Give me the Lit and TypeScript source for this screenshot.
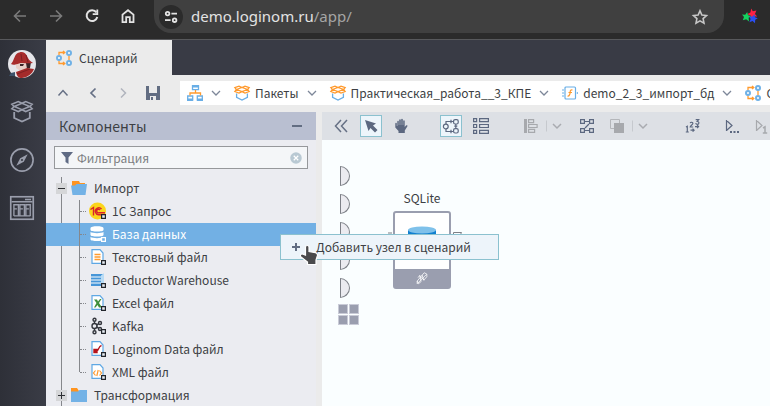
import { LitElement, html, svg, css } from "lit";
import { customElement, property } from "lit/decorators.js";
import { classMap } from "lit/directives/class-map.js";

const glyphs: Record<string, unknown> = {
  back: svg`<path d="M14 8H2.500M8 2.500L2.500 8 8 13.500" fill="none" stroke="#7b7b7b" stroke-width="1.600"/>`,
  forward: svg`<path d="M2 8h11.500M8 2.500L13.500 8 8 13.500" fill="none" stroke="#7b7b7b" stroke-width="1.600"/>`,
  reload: svg`<path d="M12.400 4.400A5.400 5.400 0 1 0 13.300 9" fill="none" stroke="#e3e3e3" stroke-width="2"/><path d="M14.200 1.500V7H8.700V5.200h3.700V1.500z" fill="#e3e3e3"/>`,
  home: svg`<path d="M2.500 14.200V6.600L8 2.200l5.500 4.400v7.600h-3.700V9.200H6.200v5z" fill="none" stroke="#e3e3e3" stroke-width="1.800"/>`,
  tune: svg`<g fill="none" stroke="#e3e3e3" stroke-width="1.800"><circle cx="4.600" cy="4.600" r="1.800"/><path d="M8.400 4.600H14M2 11.200h5.600"/><circle cx="11.600" cy="11.200" r="1.800"/></g>`,
  star: svg`<path d="M8 1.800l1.900 4.200 4.600.5-3.400 3.100.9 4.500L8 11.800l-4 2.300.9-4.500L1.500 6.500l4.600-.5z" fill="none" stroke="#c7c7c7" stroke-width="1.600"/>`,
  extension: svg`<path d="M9.200.500l1.600 2.800 3.600-.700-1.400 3.400 2.200 2.600-3.800-.200-2 2.600-.800-3.600L5 6.200l3.400-1.800z" fill="#fb2144"/><path d="M5.200 4l.800 3.200 3.200.800-2.600 1.800.4 3.600-2.800-2.200-3.400 1 1.200-3.200L0 6.600l3.200.200z" fill="#14d25f"/><path d="M12.400 6.400l.600 2.800 2.800 1-2.600 1.600-.200 3.400-2.400-2.200-3.200 1.200 1.200-3.200-1.400-2.600h3.200z" fill="#2b4ff2"/>`,
  up: svg`<path d="M3.500 10.500L8 5.500l4.500 5" fill="none" stroke="#667085" stroke-width="1.500"/>`,
  left: svg`<path d="M10.500 3.500L6 8l4.500 4.500" fill="none" stroke="#667085" stroke-width="1.700"/>`,
  right: svg`<path d="M6 3.500L10.500 8 6 12.500" fill="none" stroke="#b0b4bd" stroke-width="1.500"/>`,
  down: svg`<path d="M4 6l4 4 4-4" fill="none" stroke="#7d8799" stroke-width="1.300"/>`,
  downGrey: svg`<path d="M4 6l4 4 4-4" fill="none" stroke="#a9abb0" stroke-width="1.500"/>`,
  save: svg`<path d="M1 1h3v7h8V1h3v14H1z" fill="#626d82"/><path d="M5 11h6v4H5z" fill="#ebebeb"/><path d="M6 12h2v3H6z" fill="#626d82"/>`,
  scenario: svg`<g fill="none" stroke="#ff9a2e" stroke-width="1.300"><path d="M3 5.500V2.500h6M3 10.500v3h6M7 1l1.800 1.500L7 4M7 12l1.800 1.500L7 15M13 5.500v5"/></g><g fill="#fff" stroke="#6fb1e6" stroke-width="2"><circle cx="3" cy="8" r="2"/><circle cx="13" cy="3" r="2"/><circle cx="13" cy="13" r="2"/></g>`,
  hierarchy: svg`<g fill="#fff" stroke="#69aee6" stroke-width="1.300"><path d="M5.500.700h6v4h-6zM.700 11h5v4h-5zM10.300 11h5v4h-5z"/></g><path d="M5 .5h7v2H5zM0 13.500h6V16H0zM10 13.500h6V16h-6z" fill="#69aee6"/><path d="M8.500 5v3M3 10.500V8h10.500v2.500" fill="none" stroke="#ff9a2e" stroke-width="1.300"/>`,
  box: svg`<path d="M.800 2.600L5 1.200l3 1.300 3-1.300 4.200 1.400L13.500 4.500l1.700 2L11 8 8 6.600 5 8 .800 6.500l1.700-2zM2.500 4.500L8 2.500l5.500 2L8 6.600z" fill="none" stroke="#ff9a2e" stroke-width="1.200"/><path d="M2.600 8.500v3.800L8 15l5.400-2.700V8.500" fill="none" stroke="#69aee6" stroke-width="1.300"/>`,
  model: svg`<rect x="3" y="2" width="10.500" height="12" rx="1" fill="#fff" stroke="#69aee6" stroke-width="1.200"/><path d="M1 4v8M15.300 7v2" stroke="#69aee6" stroke-dasharray="2 1"/><path d="M10.500 5c-3-.500-2 2-2.500 3.500s-.500 3-2.500 2.500M6.500 7.500h3.500" fill="none" stroke="#ff9a2e" stroke-width="1.200"/>`,
  package: svg`<path d="M1.200 2.800L5.500 1 8 2.200 10.500 1l4.300 1.800-1.600 1.500 1.600 1.500-4.300 1.900L8 6.500 5.500 7.700 1.200 5.800l1.600-1.500zM2.800 4.300L8 2.200l5.200 2.100L8 6.500z" fill="none" stroke="#9a9eac" stroke-width="1"/><path d="M2.800 8v4L8 14.300l5.200-2.300V8" fill="none" stroke="#9a9eac" stroke-width="1.200"/>`,
  compass: svg`<circle cx="8" cy="8" r="7.400" fill="none" stroke="#9a9eac" stroke-width="1.100"/><path d="M11.800 4.200L9.200 9.200 4.200 11.800 6.800 6.800z" fill="#9a9eac"/><circle cx="8" cy="8" r=".700" fill="#383a44"/>`,
  table: svg`<rect x=".500" y=".500" width="15" height="15" fill="none" stroke="#9a9eac" stroke-width="1.100"/><path d="M1 3.900h14M10 2.300h4" stroke="#9a9eac" stroke-width="1"/><path d="M2.600 13.400V5.800h3v7.600M2.600 8.600h2M6.600 13.400V5.800h3v7.600M6.600 8.600h2M10.600 13.400V5.800h2.900v7.600M10.600 8.600h2M2.600 13.200h11" fill="none" stroke="#9a9eac" stroke-width=".900"/>`,
  funnel: svg`<path d="M2 2h12l-4.500 5.500V14L6.500 12V7.500z" fill="#5f6b84"/>`,
  clear: svg`<circle cx="8" cy="8" r="7.700" fill="#b9c9d3"/><path d="M5 5l6 6M11 5l-6 6" stroke="#fff" stroke-width="1.600"/>`,
  minus: svg`<path d="M3 8h10" stroke="#626d82" stroke-width="2"/>`,
  plus: svg`<path d="M4 8h8M8 4v8" stroke="#626d82" stroke-width="2"/>`,
  folderOpen: svg`<path d="M1 1h7l1 2h5v4H1z" fill="#ff9420"/><path d="M0 5.500h4L5.500 4H16l-1.500 11h-13z" fill="#73b2e6"/>`,
  folder: svg`<path d="M0 1h6l2 3v4H0z" fill="#ff9420"/><path d="M0 4.500h7L8.500 3H16v12H0z" fill="#73b2e6"/>`,
  collapse: svg`<path d="M8 2L2.500 8 8 14M14 2L8.500 8l5.500 6" fill="none" stroke="#667085" stroke-width="1.500"/>`,
  pointer: svg`<path d="M2 2l11 3.500-3 2 4.500 4.500-2.500 2.500L7.500 10l-2 3z" fill="#5c6880"/>`,
  hand: svg`<path d="M4.300 8V3.500c0-1 1.500-1 1.500 0V7h.400V2c0-1 1.600-1 1.600 0v5h.400V1.500c0-1 1.600-1 1.600 0V7h.400V3c0-1 1.500-1 1.500 0v6l1.300-1.500c1-.800 2 .200 1.300 1L11.800 12.500V15H5.500v-2L2.300 9.500V5.500c0-1 1.500-1 1.500 0V8z" fill="#5c6880"/>`,
  graph: svg`<g fill="none" stroke="#5c6880" stroke-width="1.200"><circle cx="2.800" cy="8.500" r="2.400"/><rect x="10.600" y="1.600" width="4.600" height="4.400" rx="1.500"/><rect x="10.600" y="10.600" width="4.600" height="4.400" rx="1.500"/><path d="M3 6V3.500h7M3 11v2.500h7M12.800 6v4.500M8 1.800v3.400M8 11.800v3.400M11.300 8.200h3"/></g>`,
  list: svg`<g fill="none" stroke="#5c6880" stroke-width="1.200"><path d="M.600.600h3v3h-3zM6.600.600h8.800v3H6.600zM.600 6.500h3v3h-3zM6.600 6.500h8.800v3H6.600zM.600 12.400h3v3h-3zM6.600 12.400h8.800v3H6.600z"/></g>`,
  align: svg`<path d="M1 1h3v14H1z" fill="#a7a9ad"/><path d="M5.600 1.600h5v3h-5zM5.600 6.500h8.500v3H5.600zM5.600 11.400h6v3h-6z" fill="none" stroke="#a7a9ad" stroke-width="1.200"/>`,
  layout: svg`<g fill="none" stroke="#5c6880" stroke-width="1.200"><path d="M1.600 1.600h3.800v3.800H1.600zM10.600 1.600h3.800v3.800h-3.800zM1.600 10.600h3.800v3.800H1.600zM10.600 10.600h3.800v3.800h-3.800zM5.400 3.500h5.200M5.400 12.500h5.200M10 6l-4 4"/></g>`,
  front: svg`<path d="M1.500 1.500h9v9h-9z" fill="none" stroke="#b4b6ba"/><path d="M5 5h10v10H5z" fill="#a7a9ad"/>`,
  numbering: svg`<g fill="none" stroke="#5c6880" stroke-width="1.200"><path d="M1 9l1.300-.800V14M.800 14h3M5.200 5.200c.400-1.400 3-1.200 2.600.500-.200 1-2.600 2.300-2.600 3.300h3M10.700 1.600h3l-1.500 1.900c2.400 0 2 2.800.200 2.800-1 0-1.500-.300-1.800-1M5.500 12.200h3.500M7.600 10.700l1.500 1.500-1.500 1.500M10 8.600h3.500M12.100 7.100l1.500 1.500-1.500 1.500"/></g>`,
  run: svg`<path d="M2.500 2v11M2.500 2.500l5.500 5-5.500 5" fill="none" stroke="#5c6880" stroke-width="1.200"/><path d="M6 13h2v2H6zM9.500 13h2v2h-2zM13 13h2v2h-2z" fill="#5c6880"/>`,
  runOne: svg`<path d="M2.500 2v11M2.500 2.500l5.500 5-5.500 5" fill="none" stroke="#a7a9ad" stroke-width="1.200"/><path d="M9 10l2-1.200V15M8.800 15h4.400" fill="none" stroke="#a7a9ad" stroke-width="1.500"/>`,
  node: svg`<path d="M2.500 11.500V14.500L13 4M5 5.500l5.500 5M3.500 7.500L5.500 5l1.500 7-3 2.500-1.500-3 8-9.500 3 1.500v3l-3.500 4L8 4.500" fill="none" stroke="#fff" stroke-width=".900"/>`,
};

function icon(name: string, size = 16) {
  return html`<svg width=${size} height=${size} viewBox="0 0 16 16" aria-hidden="true">${glyphs[name]}</svg>`;
}

const fileFrame = svg`<path d="M3 1.600h8L14 5v10.400H3z" fill="#fff" stroke="#5fa8e4" stroke-width="1.200"/>`;
const badge = svg`<path d="M12.600 12.600h3.800v3.800h-3.800z" fill="#e8eef5" stroke="#22252b" stroke-width="1.200"/>`;
const lightBadge = svg`<path d="M12.600 12.600h3.800v3.800h-3.800z" fill="#72b0e4" stroke="#fff" stroke-width="1.200"/>`;
const components: { name: string; art: unknown }[] = [
  { name: "1С Запрос", art: svg`<circle cx="8.500" cy="9" r="8.500" fill="#fbd51c"/><path d="M1.500 7.500L4.500 5.500v8M12.500 7a3.500 3.500 0 1 0-2 5.700H16M11 8a1.800 1.800 0 1 0-1 2.800h6" fill="none" stroke="#d8232a" stroke-width="1.400"/>` },
  { name: "База данных", art: svg`<path d="M1.500 3c0-2.500 13-2.500 13 0v2c0 2-13 2-13 0zM1.500 7c2 1.500 11 1.500 13 0v3c0 2-13 2-13 0zM1.500 12c2 1.500 11 1.500 13 0v2.500c0 2-13 2-13 0z" fill="#fff"/>` },
  { name: "Текстовый файл", art: svg`${fileFrame}<path d="M5.500 6.500h6M5.500 9h6M5.500 11.500h6" stroke="#ff9a2e" stroke-width="1.300"/>` },
  { name: "Deductor Warehouse", art: svg`<path d="M2 3h12v12H2z" fill="#4796d8"/><path d="M12 4.500L15 2v11l-3 2z" fill="#b9dcf5"/><path d="M2 6h10M2 9h10M2 12h10" stroke="#fff"/>` },
  { name: "Excel файл", art: svg`${fileFrame}<path d="M5 5.500h3l1 2 2-2.500h1.500L10 9l3 4.500h-3L8.500 11 6.500 13.500H5L7.500 9z" fill="#3f8f3c"/>` },
  { name: "Kafka", art: svg`<g fill="none" stroke="#33363d" stroke-width="1.400"><circle cx="5.500" cy="9" r="2.500"/><circle cx="5.500" cy="2.800" r="1.500"/><circle cx="5.500" cy="15.200" r="1.500"/><circle cx="11" cy="6" r="1.500"/><circle cx="11" cy="12" r="1.500"/><path d="M5.500 4.500v2M5.500 11.500v2M7.500 8l2-1M7.500 10l2 1"/></g>` },
  { name: "Loginom Data файл", art: svg`${fileFrame}<path d="M5 9.500h3v3H5zM7.500 11.500C9.500 11 9.500 6 12.500 5.500" fill="none" stroke="#b5121b" stroke-width="1.400"/><path d="M5 9.500h3v3H5z" fill="#b5121b"/>` },
  { name: "XML файл", art: svg`${fileFrame}<path d="M6.500 7.500l-2 2.500 2 2.500M10.500 7.500l2 2.500-2 2.500M9.200 7l-1.400 6" fill="none" stroke="#ff9a2e" stroke-width="1.200"/>` },
];

@customElement("component-tree")
class ComponentTree extends LitElement {
  @property() selected = "База данных";

  static styles = css`
    * { box-sizing: border-box; }
    :host { display: block; flex: 1; min-height: 0; overflow: hidden; padding-top: 8px; }
    ul { list-style: none; margin: 0; padding: 0; }
    .root { position: relative; }
    .root::before { content: ""; position: absolute; left: 15px; top: 0; bottom: 0; width: 1px; background: #85878c; }
    .row { display: flex; align-items: center; width: 100%; height: 23px; padding: 0 0 1px 10px; gap: 4px;
      border: 0; background: none; font: inherit; color: inherit; text-align: left; white-space: nowrap; }
    .row > svg + span { padding-left: 3px; }
    .toggle { position: relative; width: 11px; height: 11px; background: #d5d6d8; flex: none; }
    .toggle::before, .plus::after { content: ""; position: absolute; left: 2px; top: 5px; width: 7px; height: 1px; background: #2e3034; }
    .plus::after { transform: rotate(90deg); }
    .children { position: relative; }
    .children::before { content: ""; position: absolute; left: 33px; top: 0; bottom: 12px; width: 1px; background: #85878c; }
    .leaf { padding-left: 34px; gap: 3px; }
    .leaf::before { content: ""; width: 6px; flex: none; border-top: 1px dotted #85878c; }
    .leaf > svg + span { padding-left: 2px; }
    .active { background: #72b0e4; color: #fff; }
    svg { display: block; flex: none; }
  `;

  render() {
    return html`<ul class="root">
      <li>
        <button class="row"><span class="toggle"></span>${icon("folderOpen")}<span>Импорт</span></button>
        <ul class="children">
          ${components.map((c) => {
            const active = c.name === this.selected;
            return html`<li>
              <button class=${classMap({ row: true, leaf: true, active })}>
                <svg width="18" height="18" viewBox="0 0 18 18" aria-hidden="true">${c.art}${active ? lightBadge : badge}</svg><span>${c.name}</span>
              </button></li>`;
          })}
        </ul>
      </li>
      <li><button class="row"><span class="toggle plus"></span>${icon("folder")}<span>Трансформация</span></button></li>
    </ul>`;
  }
}

@customElement("app-root")
class AppRoot extends LitElement {
  static styles = css`
    * { box-sizing: border-box; }
    :host { display: flex; flex-direction: column; position: relative; height: 100vh; overflow: hidden; background: #ebebeb;
      color: #3d3f44; font: 12px/18px "Noto Sans CJK SC", sans-serif; }
    button { border: 0; padding: 0; background: none; font: inherit; color: inherit; display: flex; align-items: center; justify-content: center; flex: none; }
    a { color: inherit; text-decoration: none; }
    svg { display: block; flex: none; overflow: visible; }

    .browser { display: flex; align-items: flex-start; height: 40px; flex: none; background: #2b2b2b; border-bottom: 1px solid #58595c; padding-left: 12px; }
    .nav { display: flex; gap: 20px; padding: 8px 18px 0 0; }
    .address { display: flex; align-items: center; flex: 1; min-width: 0; height: 33px; background: #404040; border-radius: 0 0 17px 17px; padding: 0 16px 0 5px; gap: 8px; }
    .site { width: 24px; height: 24px; border-radius: 50%; background: #2b2b2b; }
    .url { flex: 1; min-width: 0; color: #e3e3e3; font: 15px/20px "Noto Sans", sans-serif; padding-bottom: 2px; }
    .url span { color: #a5a5a5; }
    .extension { padding: 8px 12px 0 18px; }

    .app { display: flex; flex: 1; min-height: 0; }
    .side { display: flex; flex-direction: column; align-items: center; gap: 24px; width: 46px; flex: none; padding: 10px 2px 0 0;
      background: linear-gradient(90deg, #2e3038, #3a3c46); }
    .side button { height: 24px; }
    .side .avatar { height: 28px; margin-bottom: -2px; }
    .main { display: flex; flex-direction: column; flex: 1; min-width: 0; }
    .tabs { display: flex; height: 35px; flex: none; background: #393b45; }
    .tab { width: 126px; padding-left: 10px; gap: 7px; background: #ebebeb; justify-content: flex-start; }
    .crumb-bar { display: flex; align-items: center; height: 36px; flex: none; padding-left: 9px; }
    .history { display: flex; gap: 14px; width: 125px; flex: none; }
    .crumbs { display: flex; align-items: center; flex: 1; min-width: 0; height: 24px; overflow: hidden; padding-left: 7px; background: #fff; white-space: nowrap; }
    .crumbs a { display: flex; align-items: center; gap: 5px; flex: none; }
    .crumbs button { padding: 0 10px 0 5px; }

    .work { display: flex; flex: 1; min-height: 0; gap: 6px; padding-top: 1px; }
    .panel { display: flex; flex-direction: column; width: 270px; flex: none; background: #ebecf1; }
    .panel-head { display: flex; align-items: center; justify-content: space-between; height: 28px; flex: none; padding: 0 11px 0 13px; background: #b9bfd1; }
    h2 { margin: 0; font-size: 14px; font-weight: 400; }
    .filter { display: flex; align-items: center; gap: 2px; height: 23px; flex: none; margin: 6px 8px 0; padding: 0 5px 0 4px; border: 1px solid #96989b; background: #f4f6f8; }
    .filter input { flex: 1; min-width: 0; border: 0; padding: 0; outline: 0; background: none; font: inherit; }
    .filter input::placeholder { color: #7c7e82; }

    .stage { display: flex; flex-direction: column; flex: 1; min-width: 0; background: #fafeff; }
    .tools { display: flex; align-items: center; height: 28px; flex: none; gap: 28px; padding-left: 8px; overflow: hidden; background: #dde0e5; }
    .group { display: flex; gap: 8px; flex: none; }
    .execution { display: flex; gap: 17px; flex: none; }
    .split { display: flex; gap: 4px; }
    .tool { width: 22px; height: 22px; border: 1px solid transparent; }
    .on { border-color: #8bc1cf; background: #edf5fb; }
    .tool.more { border-left-color: #c6c9ce; height: 12px; align-self: center; }

    .canvas { position: relative; flex: 1; min-height: 0; overflow: hidden; }
    .ports { display: flex; flex-direction: column; gap: 8px; padding: 26px 0 0 18px; width: 60px; }
    .port { width: 10px; height: 20px; border: 1px solid #7d8087; border-radius: 0 10px 10px 0; background: #ebebf0; }
    .pager { display: grid; grid-template-columns: 10px 10px; gap: 1px; width: 21px; margin: -2px 0 0 -2px; }
    .pager i { height: 10px; border: 1px solid #c9cbd7; background: #9a9eaf; }
    .node { position: absolute; left: 71px; top: 49px; width: 58px; text-align: center; }
    .card { height: 78px; margin-top: 4px; border: 2px solid #9a9eaf; border-radius: 3px; background: #fff; display: flex; flex-direction: column; justify-content: space-between; align-items: center; }
    .card > svg { margin-top: 13px; }
    .foot { width: 100%; height: 18px; background: #9a9eaf; display: flex; align-items: center; justify-content: center; }
    .pins { position: absolute; left: -10px; top: 42px; }
    .hint { position: absolute; left: 280px; top: 234px; width: 219px; height: 26px; padding: 0 0 0 7px; gap: 12px; justify-content: flex-start;
      border: 1px solid #8bc1cf; background: #edf4fa; white-space: nowrap; }
    .cursor { position: absolute; left: 299px; top: 243px; }
  `;

  private tool(name: string, label: string, on = false) {
    return html`<button class=${classMap({ tool: true, on })} aria-label=${label}>${icon(name)}</button>`;
  }

  private split(name: string, label: string) {
    return html`<div class="split">${this.tool(name, label)}<button class="tool more" aria-label="Варианты">${icon("downGrey")}</button></div>`;
  }

  private crumb(name: string, text: string) {
    return html`<a href="#">${icon(name)}${text}</a><button aria-label="Развернуть">${icon("down")}</button>`;
  }

  render() {
    return html`
      <header class="browser">
        <nav class="nav">
          <button aria-label="Назад">${icon("back")}</button><button aria-label="Вперёд">${icon("forward")}</button>
          <button aria-label="Обновить">${icon("reload")}</button><button aria-label="Домой">${icon("home")}</button>
        </nav>
        <div class="address">
          <button class="site" aria-label="Сведения о сайте">${icon("tune")}</button>
          <div class="url" role="textbox" aria-label="Адрес">demo.loginom.ru<span>/app/</span></div>
          <button aria-label="В закладки">${icon("star")}</button>
        </div>
        <button class="extension" aria-label="Расширение">${icon("extension")}</button>
      </header>
      <div class="app">
        <nav class="side">
          <button class="avatar" aria-label="Профиль"><svg width="28" height="28" viewBox="0 0 28 28">
            <circle cx="14" cy="14" r="14" fill="#e6e6ea"/>
            <path d="M8 13h13v6l-7 3-6-4z" fill="#e8cfc8"/><path d="M12 14l4 0-1 2-3 0zM18 13l5-1-1 6-3 1z" fill="#3a2528"/>
            <path d="M3 14C6 11 6 6 9 3.500c4-2.500 8-2 10 2.500 1 3 3 5 6 7-6 1-10-1-14 .500-3 1-6 2-8 .500z" fill="#a82c2c"/><path d="M13 4l1 7M18 5l2 7" stroke="#7e2023"/>
            <path d="M8 22l11-4 7 1c-2 5-6 8-12 9-4 0-5-2-6-6z" fill="#a32b2b"/><path d="M9 24l13-5" stroke="#7e2023"/><path d="M1 26l2-3 4-1v4z" fill="#3c536b"/></svg></button>
          <button aria-label="Пакеты">${icon("package", 24)}</button>
          <button aria-label="Навигация">${icon("compass", 24)}</button>
          <button aria-label="Таблицы">${icon("table", 24)}</button>
        </nav>
        <div class="main">
          <div class="tabs"><button class="tab">${icon("scenario")}Сценарий</button></div>
          <div class="crumb-bar">
            <div class="history">
              <button aria-label="Вверх">${icon("up")}</button><button aria-label="Назад">${icon("left")}</button>
              <button aria-label="Вперёд">${icon("right")}</button><button aria-label="Сохранить">${icon("save")}</button>
            </div>
            <nav class="crumbs">
              ${this.crumb("hierarchy", "")}${this.crumb("box", "Пакеты")}${this.crumb("box", "Практическая_работа__3_КПЕ")}
              ${this.crumb("model", "demo_2_3_импорт_бд")}<a href="#">${icon("scenario")}Сценарий</a>
            </nav>
          </div>
          <div class="work">
            <section class="panel">
              <div class="panel-head"><h2>Компоненты</h2><button aria-label="Свернуть">${icon("minus")}</button></div>
              <label class="filter">${icon("funnel")}<input placeholder="Фильтрация" aria-label="Фильтрация" />
                <button aria-label="Очистить">${icon("clear", 12)}</button></label>
              <component-tree></component-tree>
            </section>
            <section class="stage">
              <div class="tools">
                <div class="group">${this.tool("collapse", "Скрыть панель")}${this.tool("pointer", "Выбор", true)}${this.tool("hand", "Перемещение")}</div>
                <div class="group">${this.tool("graph", "Граф", true)}${this.tool("list", "Список")}</div>
                <div class="group">${this.split("align", "Выровнять")}${this.tool("layout", "Расположить")}${this.split("front", "Порядок")}</div>
                <div class="execution">
                  ${this.tool("numbering", "Порядок выполнения")}
                  <div class="group">${this.tool("run", "Выполнить всё")}${this.tool("runOne", "Выполнить узел")}</div>
                </div>
              </div>
              <div class="canvas">
                <div class="ports">
                  ${[0, 1, 2, 3, 4].map(() => html`<div class="port"></div>`)}
                  <div class="pager"><i></i><i></i><i></i><i></i></div>
                </div>
                <div class="node">SQLite
                  <div class="card">
                    <svg width="28" height="34" viewBox="0 0 28 34"><path d="M0 4h28v26c0 5-28 5-28 0z" fill="#0f7fd0"/><ellipse cx="14" cy="4" rx="14" ry="3.500" fill="#7fc1ea"/></svg>
                    <div class="foot">${icon("node", 14)}</div>
                  </div>
                  <svg class="pins" width="80" height="12" viewBox="0 0 80 12"><path d="M2 4l3 4M6 1v8M8 1v8M70.500 10V1.500h8l-2 4-6 .500" fill="none" stroke="#7d8087"/></svg>
                </div>
              </div>
            </section>
          </div>
        </div>
      </div>
      <button class="hint">${icon("plus")}Добавить узел в сценарий</button>
      <svg class="cursor" width="20" height="24" viewBox="0 0 20 24"><path d="M6.500 4c0-2 3.500-2 3.500 0v4.500l6.500 1.200c1.800.500 2.300 1.500 1.900 3L17 17v4.500H8.500V19L2 14c-1.500-1.800 0-3.500 2-2.800l2.500 1z" fill="#4a4a4c" stroke="#fff" stroke-width="1.200"/></svg>
    `;
  }
}
